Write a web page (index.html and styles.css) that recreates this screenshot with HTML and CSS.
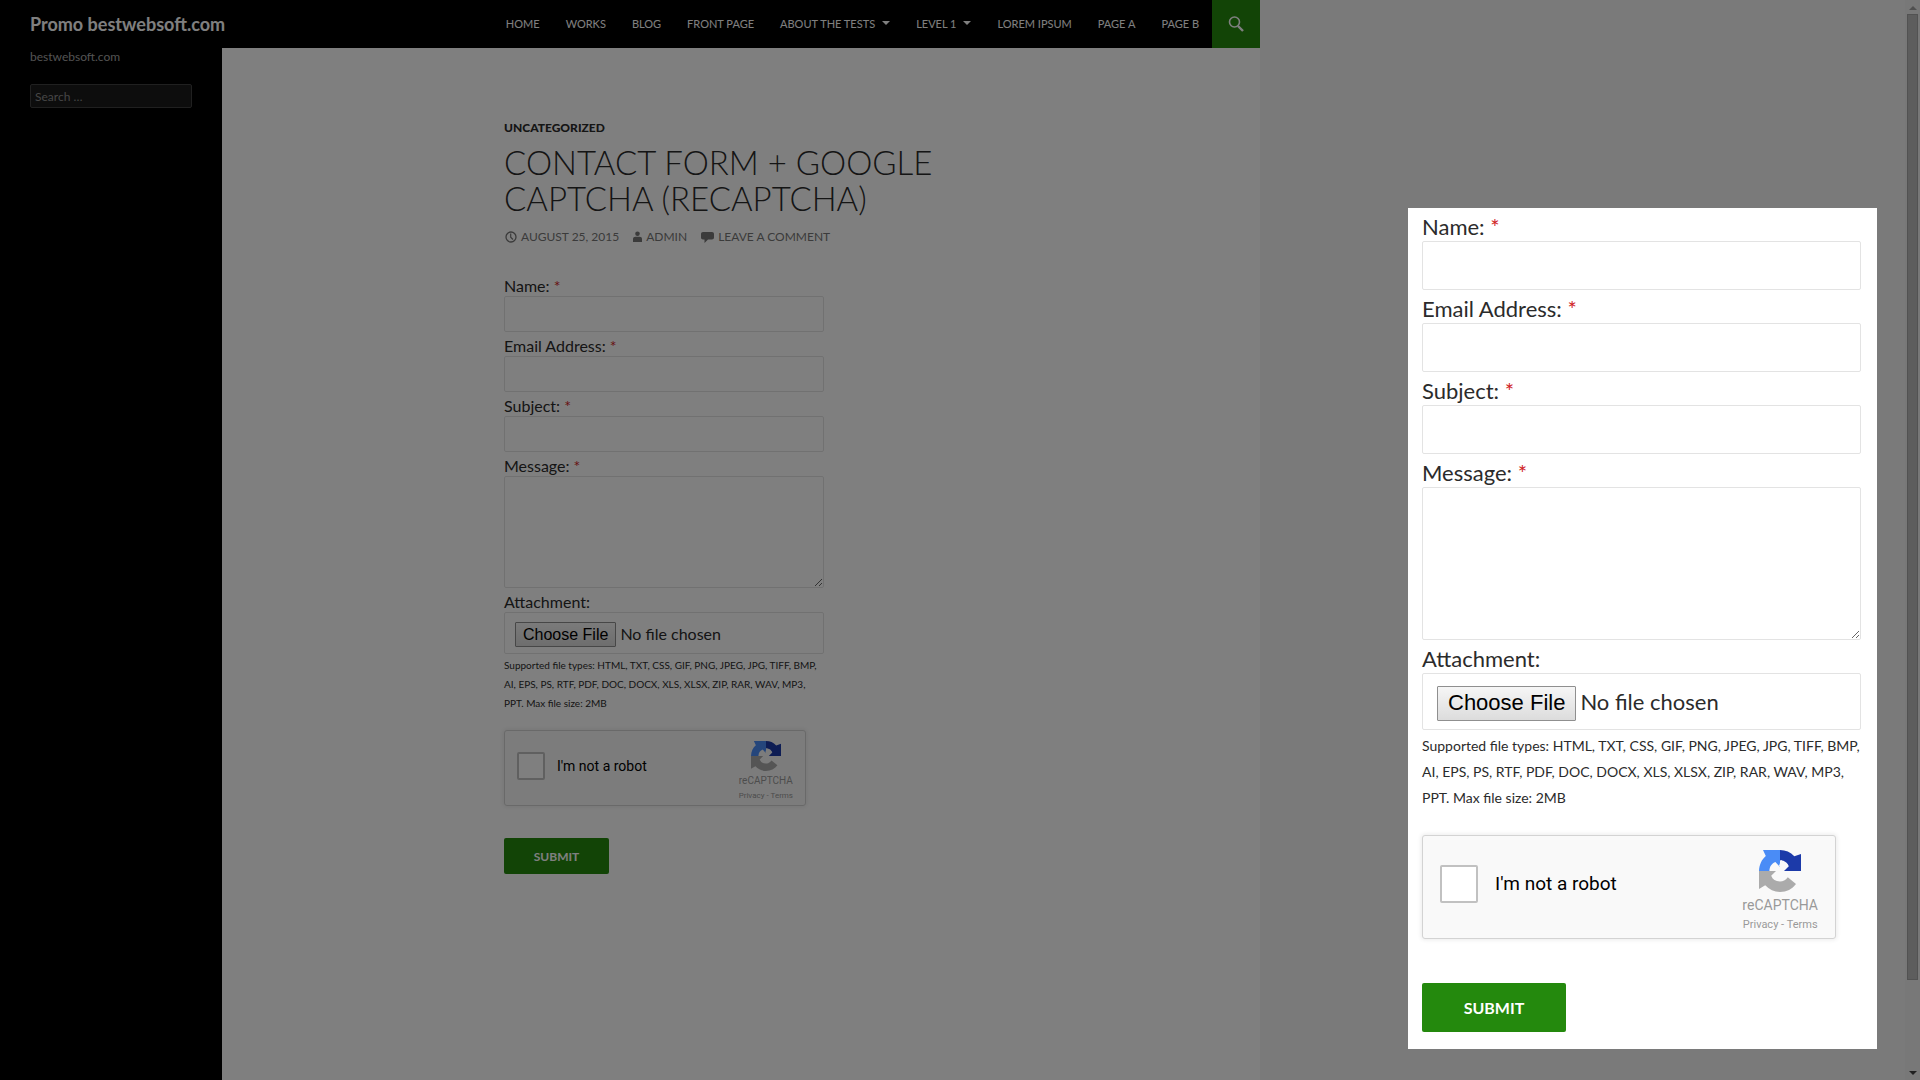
FILE: index.html
```html
<!DOCTYPE html>
<html lang="en">
<head>
<meta charset="utf-8">
<title>Contact Form + Google Captcha (reCAPTCHA)</title>
<link rel="stylesheet" href="styles.css">
</head>
<body>
<svg class="sprite" aria-hidden="true">
  <symbol id="recaptcha-logo" viewBox="0 0 42 42">
    <path fill="#1c3aa9" d="M21 0c5.600 0 10.500 2.100 14.300 6.200L42 4v17H25l4.800-4.800c-1.200-3-3.600-5.700-8.800-5.900z"/>
    <path fill="#4a8cf6" d="M21 0v17l-4.600-5c-3.400 1.400-5.800 4-6 9H0C.2 14.700 2.700 9.500 6.800 6L4 0z"/>
    <path fill="#ababab" d="M0 21h17l-4.800 4.800c1.300 3.600 4.400 5.600 8.800 5.700 3 0 5.600-1.300 7.800-4.200L37 34c-4 5.200-9.300 8-16 8-5.800-.1-10.800-2.500-14.800-6.800L0 39z"/>
    <path fill="#f9f9f9" d="M20 16l2-6 7 5-4 5z"/>
  </symbol>
</svg>

<div class="page">
  <header class="site-header">
    <h1 class="site-title"><a href="#">Promo bestwebsoft.com</a></h1>
    <nav class="site-nav">
      <a href="#">Home</a>
      <a href="#">Works</a>
      <a href="#">Blog</a>
      <a href="#">Front Page</a>
      <a href="#" class="has-menu">About The Tests</a>
      <a href="#" class="has-menu">Level 1</a>
      <a href="#">Lorem Ipsum</a>
      <a href="#">Page A</a>
      <a href="#">Page B</a>
    </nav>
    <button class="search-toggle" type="button" aria-label="Search">
      <svg width="16" height="16" viewBox="0 0 16 16" fill="none" stroke="#fff"><circle cx="6.500" cy="6" r="5" stroke-width="1.600"/><path d="M10 10l5 5" stroke-width="2.400"/></svg>
    </button>
  </header>
  <div class="columns">
    <aside class="sidebar">
      <p class="tagline">bestwebsoft.com</p>
      <input class="sidebar-search" type="search" placeholder="Search …" aria-label="Search">
    </aside>
    <main class="content">
      <article class="entry">
        <a class="category" href="#">Uncategorized</a>
        <h2 class="entry-title">Contact Form + Google Captcha (reCAPTCHA)</h2>
        <div class="entry-meta">
          <a href="#"><svg width="13" height="12" viewBox="0 0 13 12" fill="none" stroke="#767676"><circle cx="7" cy="6" r="5" stroke-width="1.300"/><path d="M6.700 2.500v3.700l2.300 2.300" stroke-width="1.200"/></svg>August 25, 2015</a>
          <a href="#"><svg width="9" height="12" viewBox="0 0 9 12" fill="#767676"><circle cx="4.500" cy="2.700" r="2.300"/><path d="M0 11V8c0-1.500 1-2.300 2.300-2.300h4.400C8 5.700 9 6.500 9 8v3z"/></svg>admin</a>
          <a href="#"><svg width="13" height="12" viewBox="0 0 13 12" fill="#767676"><path d="M2 1h9c1.200 0 2 .8 2 2v3.500c0 1.200-.8 2-2 2H7L3.500 12V8.500H2c-1.200 0-2-.8-2-2V3c0-1.200.8-2 2-2z"/></svg>Leave a comment</a>
        </div>
        <form class="contact-form">
          <label class="field-label" for="name">Name: <span class="required">*</span></label>
          <input class="field" id="name" type="text">
          <label class="field-label" for="email">Email Address: <span class="required">*</span></label>
          <input class="field" id="email" type="email">
          <label class="field-label" for="subject">Subject: <span class="required">*</span></label>
          <input class="field" id="subject" type="text">
          <label class="field-label" for="message">Message: <span class="required">*</span></label>
          <textarea class="field message" id="message"></textarea>
          <label class="field-label" for="file">Attachment:</label>
          <input class="field file" id="file" type="file">
          <p class="hint">Supported file types: HTML, TXT, CSS, GIF, PNG, JPEG, JPG, TIFF, BMP, AI, EPS, PS, RTF, PDF, DOC, DOCX, XLS, XLSX, ZIP, RAR, WAV, MP3, PPT. Max file size: 2MB</p>
          <div class="captcha">
            <input class="captcha-box" id="robot" type="checkbox">
            <label class="captcha-label" for="robot">I'm not a robot</label>
            <div class="captcha-brand">
              <svg class="captcha-logo" aria-hidden="true"><use href="#recaptcha-logo"/></svg>
              <span class="captcha-name">reCAPTCHA</span>
              <span class="captcha-links"><a href="#">Privacy</a> - <a href="#">Terms</a></span>
            </div>
          </div>
          <button class="submit" type="submit">Submit</button>
        </form>
      </article>
    </main>
  </div>
</div>

<div class="scrollbar" aria-hidden="true">
  <span class="arrow-up"></span>
  <span class="thumb"></span>
  <span class="arrow-down"></span>
</div>

<div class="backdrop"></div>

<section class="popup" aria-label="Contact form">
  <form class="contact-form large">
    <label class="field-label" for="popup-name">Name: <span class="required">*</span></label>
    <input class="field" id="popup-name" type="text">
    <label class="field-label" for="popup-email">Email Address: <span class="required">*</span></label>
    <input class="field" id="popup-email" type="email">
    <label class="field-label" for="popup-subject">Subject: <span class="required">*</span></label>
    <input class="field" id="popup-subject" type="text">
    <label class="field-label" for="popup-message">Message: <span class="required">*</span></label>
    <textarea class="field message" id="popup-message"></textarea>
    <label class="field-label" for="popup-file">Attachment:</label>
    <input class="field file" id="popup-file" type="file">
    <p class="hint">Supported file types: HTML, TXT, CSS, GIF, PNG, JPEG, JPG, TIFF, BMP, AI, EPS, PS, RTF, PDF, DOC, DOCX, XLS, XLSX, ZIP, RAR, WAV, MP3, PPT. Max file size: 2MB</p>
    <div class="captcha">
      <input class="captcha-box" id="popup-robot" type="checkbox">
      <label class="captcha-label" for="popup-robot">I'm not a robot</label>
      <div class="captcha-brand">
        <svg class="captcha-logo" aria-hidden="true"><use href="#recaptcha-logo"/></svg>
        <span class="captcha-name">reCAPTCHA</span>
        <span class="captcha-links"><a href="#">Privacy</a> - <a href="#">Terms</a></span>
      </div>
    </div>
    <button class="submit" type="submit">Submit</button>
  </form>
</section>
</body>
</html>
```
FILE: styles.css
```css
* {
  box-sizing: border-box;
}

body {
  margin: 0;
  background: #f5f5f5;
  color: #2b2b2b;
  font-family: Lato, "Liberation Sans", sans-serif;
  font-size: 16px;
}

a {
  color: inherit;
  text-decoration: none;
}

.sprite {
  display: none;
}

.page {
  display: flex;
  flex-direction: column;
  max-width: 1260px;
  min-height: 100vh;
}

/* Header */
.site-header {
  display: flex;
  align-items: center;
  height: 48px;
  padding-left: 30px;
  background: #000;
  color: #fff;
}

.site-title {
  flex: 1;
  margin: 0;
  font-size: 18px;
  font-weight: 700;
  line-height: 48px;
}

.site-nav {
  display: flex;
  gap: 26px;
  margin-right: 13px;
  padding-bottom: 2px;
  font-size: 11px;
  text-transform: uppercase;
}

.has-menu {
  display: flex;
  align-items: center;
  gap: 7px;
}

.has-menu::after {
  content: "";
  border: 4px solid transparent;
  border-top-color: #fff;
  border-bottom: 0;
}

.search-toggle {
  display: flex;
  align-items: center;
  justify-content: center;
  width: 48px;
  height: 48px;
  padding: 0;
  border: 0;
  background: #24890d;
}

/* Columns */
.columns {
  display: flex;
  flex: 1;
}

.sidebar {
  width: 222px;
  padding: 0 30px;
  background: #000;
}

.tagline {
  margin: 0 0 18px;
  color: #a6a6a6;
  font-size: 12px;
  line-height: 18px;
}

.sidebar-search {
  display: block;
  width: 100%;
  height: 24px;
  padding: 0 4px;
  border: 1px solid #404040;
  border-radius: 2px;
  background: #1a1a1a;
  color: #999;
  font: 12px Lato, sans-serif;
}

.sidebar-search::placeholder {
  color: #8c8c8c;
}

.content {
  flex: 1;
  padding: 72px 0 48px;
  background: #fff;
}

.entry {
  max-width: 474px;
  margin: 0 auto;
}

.category {
  display: block;
  font-size: 12px;
  font-weight: 900;
  line-height: 16px;
  text-transform: uppercase;
}

.entry-title {
  margin: 8px 0 13px;
  font-size: 33px;
  font-weight: 300;
  line-height: 36px;
  text-transform: uppercase;
}

.entry-meta {
  display: flex;
  gap: 14px;
  margin-bottom: 27px;
  color: #767676;
  font-size: 12px;
  line-height: 16px;
  text-transform: uppercase;
}

.entry-meta a {
  display: flex;
  align-items: center;
  gap: 4px;
}

/* Contact form */
.contact-form {
  --text: 16px;
  --line: 20px;
  --label-gap: 4px;
  --field: 36px;
  --message: 112px;
  --file: 42px;
  --file-button: 25px;
  --file-pad: 10px;
  --button-pad: 7px;
  --hint: 10px;
  --hint-line: 19px;
  --hint-before: 2px;
  --hint-after: 17px;
  --captcha-width: 302px;
  --captcha-height: 76px;
  --captcha-pad: 12px;
  --captcha-lift: 4px;
  --box: 28px;
  --captcha-text: 14px;
  --logo: 30px;
  --logo-before: 10px;
  --logo-after: 2px;
  --brand-text: 10px;
  --links-text: 8px;
  --brand-line: 15px;
  --submit-width: 105px;
  --submit-text: 12px;
  --submit-gap: 32px;
  display: flex;
  flex-direction: column;
  align-items: flex-start;
  max-width: 320px;
  font-size: var(--text);
  line-height: var(--line);
}

.contact-form.large {
  --text: 22px;
  --line: 28px;
  --label-gap: 5px;
  --field: 49px;
  --message: 153px;
  --file: 57px;
  --file-button: 35px;
  --file-pad: 14px;
  --button-pad: 10px;
  --hint: 14px;
  --hint-line: 26px;
  --hint-before: 3px;
  --hint-after: 24px;
  --captcha-width: 414px;
  --captcha-height: 104px;
  --captcha-pad: 17px;
  --captcha-lift: 6px;
  --box: 38px;
  --captcha-text: 19px;
  --logo: 42px;
  --logo-before: 14px;
  --logo-after: 3px;
  --brand-text: 14px;
  --links-text: 11px;
  --brand-line: 20px;
  --submit-width: 144px;
  --submit-text: 16px;
  --submit-gap: 44px;
  max-width: none;
}

.field-label {
  padding-top: var(--label-gap);
}

.required {
  color: #d0241f;
}

.field {
  display: block;
  width: 100%;
  height: var(--field);
  padding: 0 10px;
  border: 1px solid #e3e3e3;
  border-radius: 2px;
  background: #fff;
  color: #2b2b2b;
  font-family: inherit;
  font-size: var(--text);
}

.message {
  height: var(--message);
  resize: both;
}

.file {
  height: var(--file);
  padding: calc((var(--file) - var(--file-button) - 2px) / 2) var(--file-pad);
  line-height: var(--file-button);
}

.file::file-selector-button {
  height: var(--file-button);
  margin: 0 4px 0 0;
  padding: 0 var(--button-pad);
  border: 1px solid #8f8f8f;
  border-radius: 1px;
  background: linear-gradient(#f6f6f6, #dcdcdc);
  color: #000;
  font-family: "Liberation Sans", Arial, sans-serif;
  font-size: var(--text);
}

.hint {
  margin: var(--hint-before) 0 var(--hint-after);
  font-size: var(--hint);
  line-height: var(--hint-line);
}

.captcha {
  display: flex;
  align-items: center;
  gap: var(--captcha-pad);
  width: var(--captcha-width);
  height: var(--captcha-height);
  margin-bottom: var(--submit-gap);
  padding: 0 var(--captcha-pad) var(--captcha-lift);
  border: 1px solid #d3d3d3;
  border-radius: 3px;
  background: #f9f9f9;
  box-shadow: 0 0 4px 1px rgba(0, 0, 0, 0.08);
  color: #000;
  font-family: Roboto, sans-serif;
}

.captcha-box {
  width: var(--box);
  height: var(--box);
  margin: 0;
  border: 2px solid #c1c1c1;
  border-radius: 2px;
  background: #fff;
  appearance: none;
}

.captcha-label {
  flex: 1;
  font-size: var(--captcha-text);
}

.captcha-brand {
  display: flex;
  flex-direction: column;
  align-items: center;
  align-self: flex-start;
  padding-top: var(--logo-before);
  color: #999;
  line-height: var(--brand-line);
}

.captcha-logo {
  width: var(--logo);
  height: var(--logo);
  margin-bottom: var(--logo-after);
}

.captcha-name {
  font-size: var(--brand-text);
}

.captcha-links {
  font-size: var(--links-text);
}

.submit {
  width: var(--submit-width);
  height: var(--field);
  padding: 0;
  border: 0;
  border-radius: 2px;
  background: #24890d;
  color: #fff;
  font-family: inherit;
  font-size: var(--submit-text);
  font-weight: 700;
  text-transform: uppercase;
}

/* Window scrollbar */
.scrollbar {
  position: fixed;
  top: 0;
  right: 0;
  bottom: 0;
  display: flex;
  flex-direction: column;
  align-items: center;
  width: 15px;
  padding: 6px 0 5px;
  background: #f1f1f1;
}

.arrow-up,
.arrow-down {
  border: 4px solid transparent;
}

.arrow-up {
  border-top: 0;
  border-bottom-color: #a0a0a0;
}

.arrow-down {
  margin-top: auto;
  border-top-color: #404040;
  border-bottom: 0;
}

.thumb {
  width: 11px;
  height: calc(90% + 4px);
  margin-top: 4px;
  border: 1px solid #a5a5a5;
  background: #bababa;
}

/* Popup */
.backdrop {
  position: fixed;
  inset: 0;
  background: rgba(0, 0, 0, 0.5);
}

.popup {
  position: absolute;
  top: 208px;
  right: 43px;
  width: 469px;
  padding: 0 16px 17px 14px;
  background: #fff;
}
```
